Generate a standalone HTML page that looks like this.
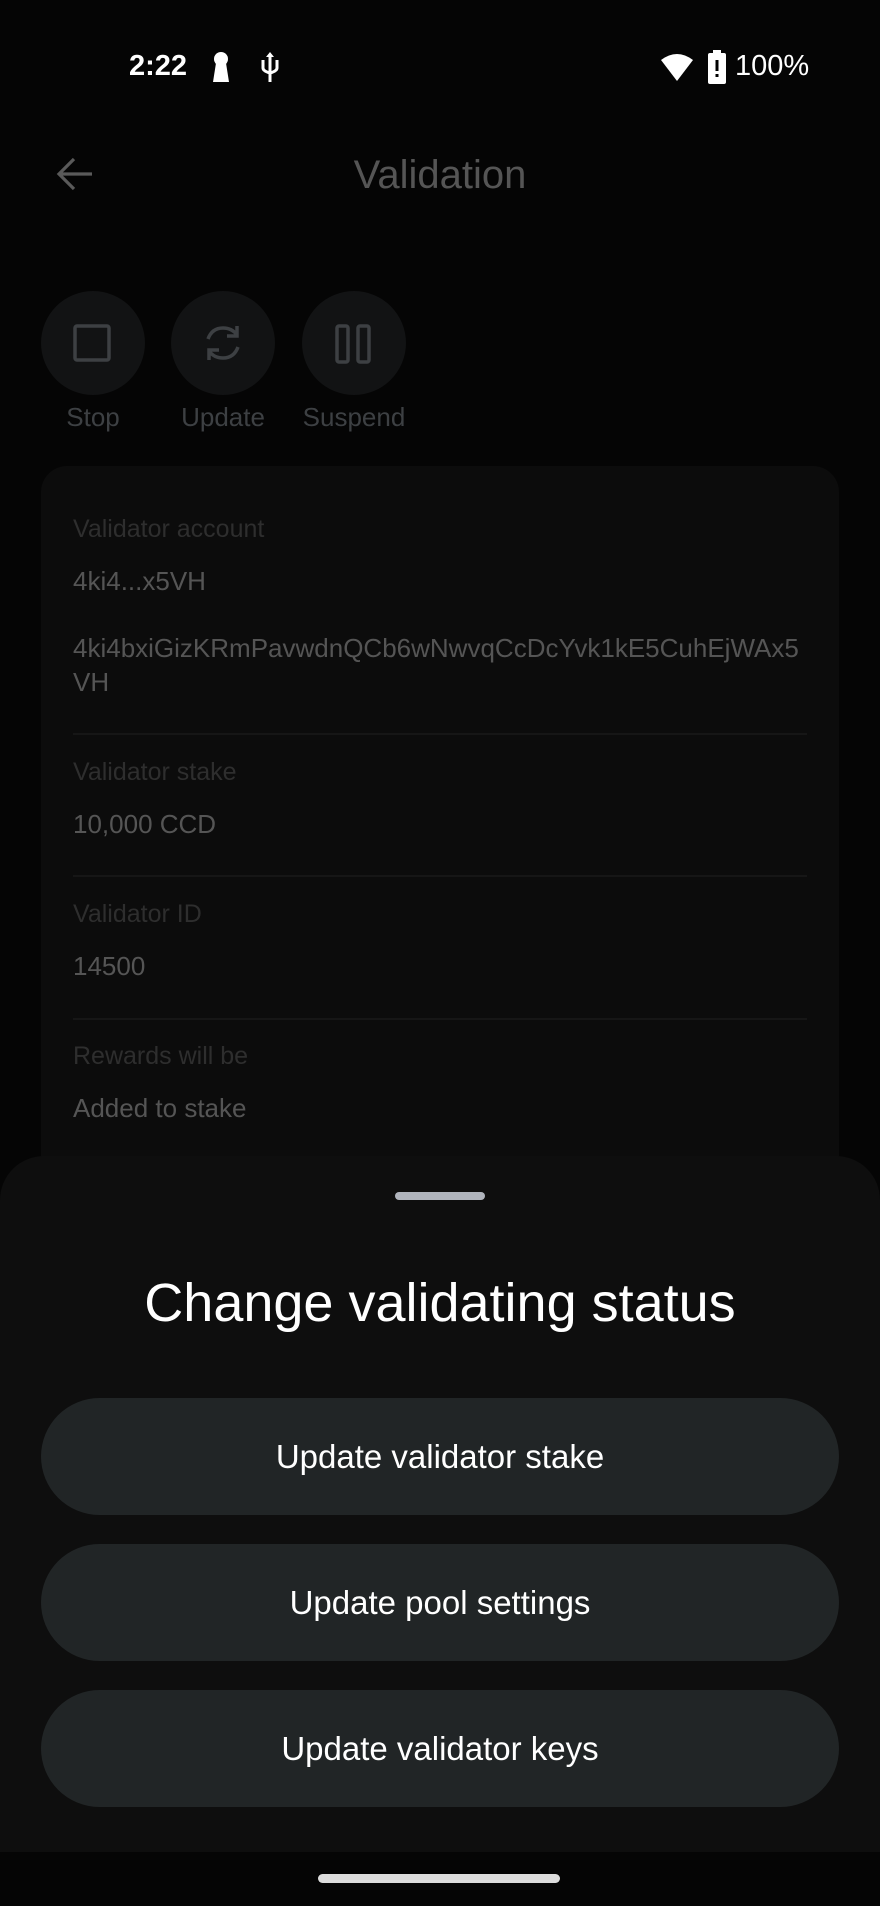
<!DOCTYPE html>
<html><head><meta charset="utf-8">
<style>
*{margin:0;padding:0;box-sizing:border-box}
body{width:880px;height:1906px;background:#050505;font-family:"Liberation Sans",sans-serif;position:relative;overflow:hidden}
.a{position:absolute;white-space:nowrap}
.circ{position:absolute;width:104px;height:104px;border-radius:50%;background:#121314;top:291px}
.lbl{position:absolute;top:402px;font-size:26px;color:#3d4043;width:130px;text-align:center}
.card{position:absolute;left:41px;top:466px;width:798px;height:720px;background:#0c0c0c;border-radius:26px}
.k{position:absolute;left:73px;font-size:25px;color:#2e2e2e}
.v{position:absolute;left:73px;font-size:26px;color:#555}
.hr{position:absolute;left:73px;width:734px;height:2px;background:#161616}
.sheet{position:absolute;left:0;top:1156px;width:880px;height:700px;background:#0e0e0e;border-radius:44px 44px 0 0}
.btn{position:absolute;left:41px;width:798px;height:117px;border-radius:59px;background:#212526;color:#fff;font-size:33px;text-align:center;line-height:117px}
</style></head><body>
<div class="a" style="left:129px;top:50px;font-size:29px;color:#fff;font-weight:bold">2:22</div>
<svg class="a" style="left:209px;top:51px" width="24" height="32" viewBox="0 0 24 32"><circle cx="12" cy="8" r="7" fill="#fff"/><path d="M7 12 L4 31 H20 L17 12Z" fill="#fff"/></svg>
<svg class="a" style="left:258px;top:52px" width="24" height="32" viewBox="0 0 24 32" fill="none" stroke="#fff" stroke-width="3"><path d="M12 2V30M5 8V16Q5 19 12 21Q19 19 19 16V8"/><path d="M12 0L8 5H16Z" fill="#fff" stroke="none"/></svg>
<svg class="a" style="left:660px;top:52px" width="34" height="30" viewBox="0 0 34 30"><path d="M1 8Q17 -4 33 8L17 29Z" fill="#fff"/></svg>
<svg class="a" style="left:708px;top:50px" width="18" height="34" viewBox="0 0 18 34"><rect x="5" y="0" width="8" height="4" fill="#fff"/><rect x="0" y="3" width="18" height="31" rx="2" fill="#fff"/><rect x="7.5" y="10" width="3" height="11" fill="#000"/><rect x="7.5" y="24" width="3" height="3" fill="#000"/></svg>
<div class="a" style="left:735px;top:50px;font-size:29px;color:#fff">100%</div>

<svg class="a" style="left:56px;top:156px" width="38" height="36" viewBox="0 0 38 36" fill="none" stroke="#5a5a5a" stroke-width="3.2"><path d="M36 18H4M18 3L3 18L18 33"/></svg>
<div class="a" style="left:0;width:880px;text-align:center;top:153px;font-size:40px;color:#555">Validation</div>

<div class="circ" style="left:41px"></div>
<div class="circ" style="left:171px"></div>
<div class="circ" style="left:302px"></div>
<svg class="a" style="left:73px;top:324px" width="38" height="38" viewBox="0 0 38 38"><rect x="2" y="2" width="34" height="34" rx="2" fill="none" stroke="#3d4043" stroke-width="3.5"/></svg>
<svg class="a" style="left:202px;top:322px" width="42" height="42" viewBox="0 0 42 42" fill="none" stroke="#3d4043" stroke-width="3.5"><path d="M6 17Q10 6 21 6Q30 6 35 13M35 4V14H25M36 25Q32 36 21 36Q12 36 7 29M7 38V28H17"/></svg>
<svg class="a" style="left:334px;top:324px" width="40" height="40" viewBox="0 0 40 40" fill="none" stroke="#3d4043" stroke-width="3.5"><rect x="3" y="2" width="11" height="36" rx="2"/><rect x="24" y="2" width="11" height="36" rx="2"/></svg>
<div class="lbl" style="left:28px">Stop</div>
<div class="lbl" style="left:158px">Update</div>
<div class="lbl" style="left:289px">Suspend</div>

<div class="card"></div>
<div class="k" style="top:515px">Validator account</div>
<div class="v" style="top:566px">4ki4...x5VH</div>
<div class="v" style="top:633px">4ki4bxiGizKRmPavwdnQCb6wNwvqCcDcYvk1kE5CuhEjWAx5</div>
<div class="v" style="top:667px">VH</div>
<div class="hr" style="top:733px"></div>
<div class="k" style="top:758px">Validator stake</div>
<div class="v" style="top:809px">10,000 CCD</div>
<div class="hr" style="top:875px"></div>
<div class="k" style="top:900px">Validator ID</div>
<div class="v" style="top:951px">14500</div>
<div class="hr" style="top:1018px"></div>
<div class="k" style="top:1042px">Rewards will be</div>
<div class="v" style="top:1093px">Added to stake</div>

<div class="sheet"></div>
<div class="a" style="left:395px;top:1192px;width:90px;height:8px;border-radius:4px;background:#b0b4bc"></div>
<div class="a" style="left:0;width:880px;text-align:center;top:1272px;font-size:54px;color:#fff">Change validating status</div>
<div class="btn" style="top:1398px">Update validator stake</div>
<div class="btn" style="top:1544px">Update pool settings</div>
<div class="btn" style="top:1690px">Update validator keys</div>
<div class="a" style="left:0;top:1852px;width:880px;height:54px;background:#050505"></div>
<div class="a" style="left:318px;top:1874px;width:242px;height:9px;border-radius:5px;background:#ddd"></div>
</body></html>
